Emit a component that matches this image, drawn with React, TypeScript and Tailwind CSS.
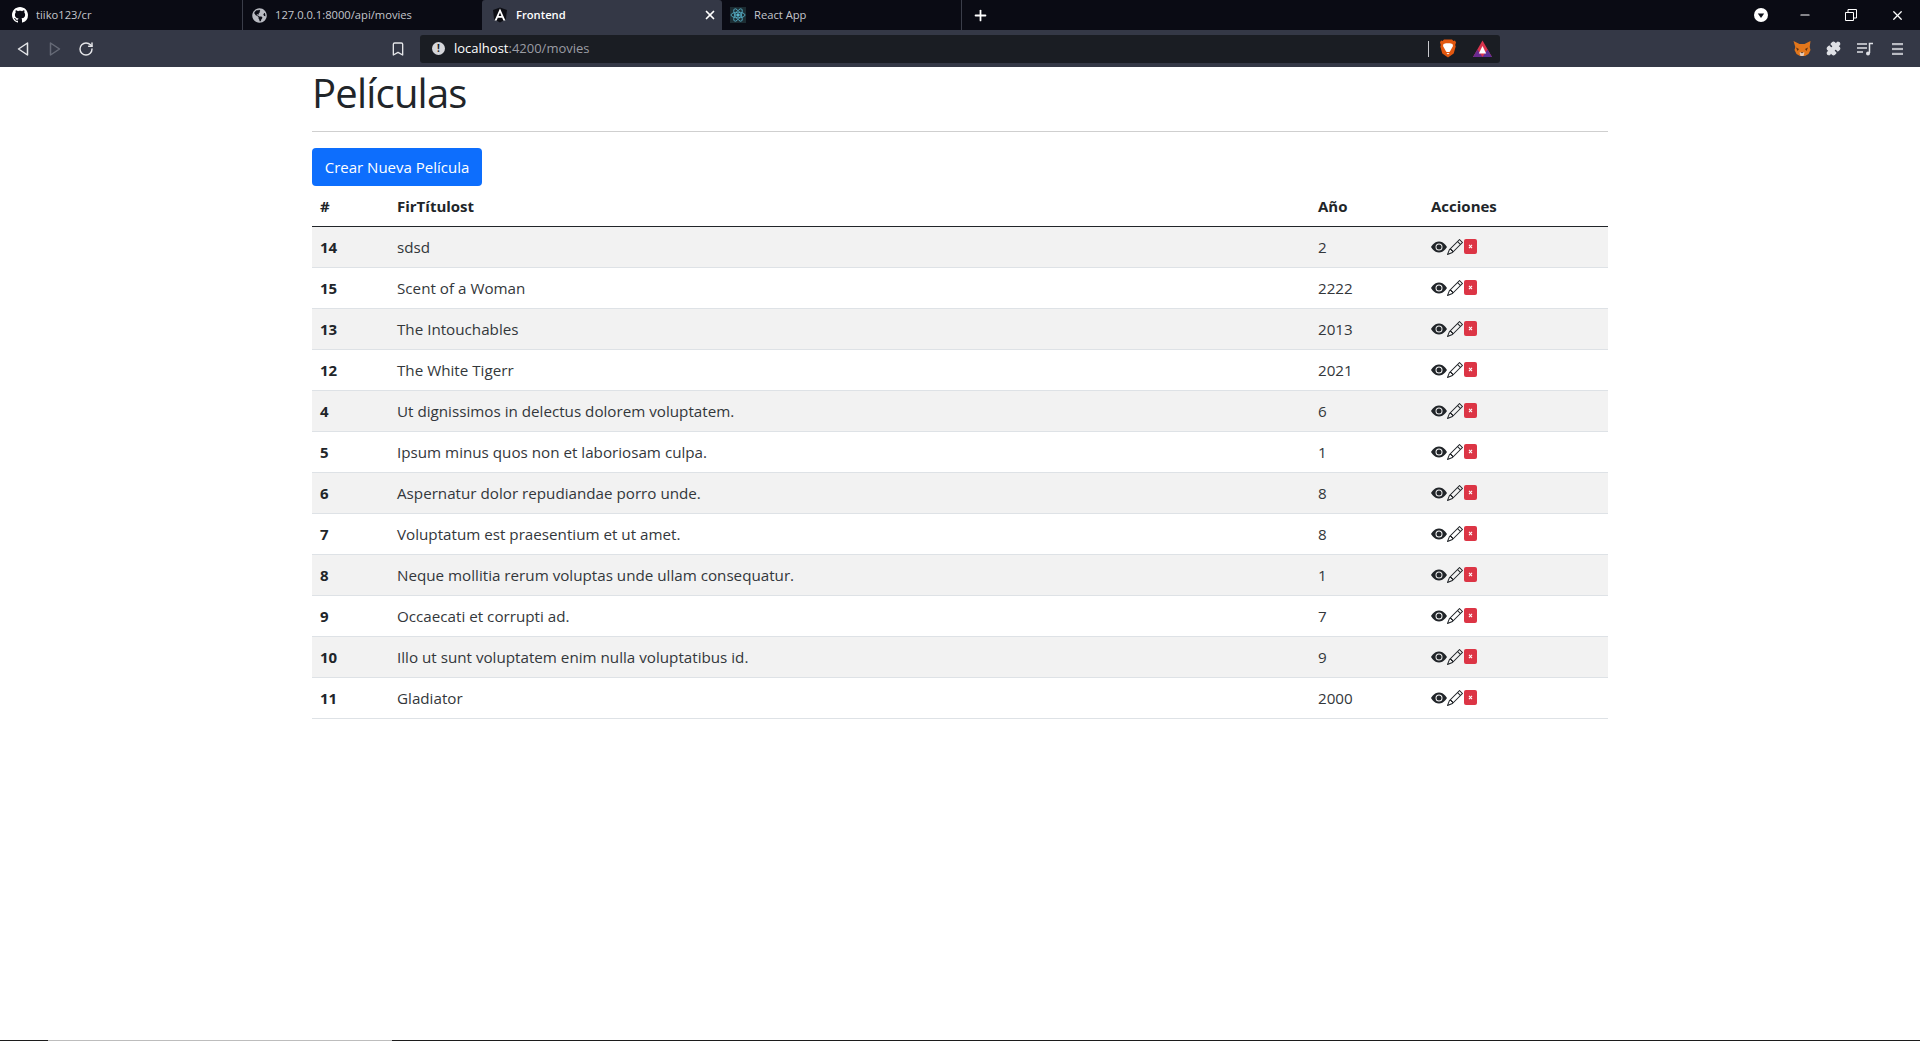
import { BsEyeFill, BsPencil } from 'react-icons/bs';
import { FaGlobeAmericas } from 'react-icons/fa';
import { Plus, X, Minus, RotateCw, Bookmark, Puzzle } from 'lucide-react';

const movies = [
  { id: 14, title: 'sdsd', year: '2' },
  { id: 15, title: 'Scent of a Woman', year: '2222' },
  { id: 13, title: 'The Intouchables', year: '2013' },
  { id: 12, title: 'The White Tigerr', year: '2021' },
  { id: 4, title: 'Ut dignissimos in delectus dolorem voluptatem.', year: '6' },
  { id: 5, title: 'Ipsum minus quos non et laboriosam culpa.', year: '1' },
  { id: 6, title: 'Aspernatur dolor repudiandae porro unde.', year: '8' },
  { id: 7, title: 'Voluptatum est praesentium et ut amet.', year: '8' },
  { id: 8, title: 'Neque mollitia rerum voluptas unde ullam consequatur.', year: '1' },
  { id: 9, title: 'Occaecati et corrupti ad.', year: '7' },
  { id: 10, title: 'Illo ut sunt voluptatem enim nulla voluptatibus id.', year: '9' },
  { id: 11, title: 'Gladiator', year: '2000' },
];

function GithubMark() {
  return (
    <svg viewBox="0 0 16 16" className="h-4 w-4 fill-white">
      <path d="M8 0C3.58 0 0 3.58 0 8c0 3.54 2.29 6.53 5.47 7.59.4.07.55-.17.55-.38 0-.19-.01-.82-.01-1.49-2.01.37-2.53-.49-2.69-.94-.09-.23-.48-.94-.82-1.13-.28-.15-.68-.52-.01-.53.63-.01 1.08.58 1.23.82.72 1.21 1.87.87 2.33.66.07-.52.28-.87.51-1.07-1.78-.2-3.64-.89-3.64-3.95 0-.87.31-1.59.82-2.15-.08-.2-.36-1.02.08-2.12 0 0 .67-.21 2.2.82.64-.18 1.32-.27 2-.27s1.36.09 2 .27c1.53-1.04 2.2-.82 2.2-.82.44 1.1.16 1.92.08 2.12.51.56.82 1.27.82 2.15 0 3.07-1.87 3.75-3.65 3.95.29.25.54.73.54 1.48 0 1.07-.01 1.93-.01 2.2 0 .21.15.46.55.38A8.01 8.01 0 0 0 16 8c0-4.42-3.58-8-8-8z" />
    </svg>
  );
}

function AngularMark() {
  return (
    <svg viewBox="0 0 16 16" className="h-4 w-4">
      <path d="M8 0.500 1 3l1.100 9.300L8 15.500l5.900-3.200L15 3z" fill="#0d0e14" />
      <path d="M8 1.500 2.600 13.500h2.100l1.100-2.700h4.400l1.100 2.700h2.100zM6.600 9 8 5.500 9.400 9z" fill="#fff" />
    </svg>
  );
}

function ReactMark() {
  return (
    <svg viewBox="0 0 16 16" className="h-4 w-4 bg-[#1c2c32]" fill="none" stroke="#58b4cc" strokeWidth="0.800">
      <ellipse cx="8" cy="8" rx="7" ry="2.800" />
      <ellipse cx="8" cy="8" rx="7" ry="2.800" transform="rotate(60 8 8)" />
      <ellipse cx="8" cy="8" rx="7" ry="2.800" transform="rotate(120 8 8)" />
      <circle cx="8" cy="8" r="1.300" fill="#58b4cc" />
    </svg>
  );
}

function BraveLion() {
  return (
    <svg viewBox="0 0 16 19" className="h-[19px] w-4">
      <path d="M4 0.500h8l1.500 1.500 1.500-.5 1 2-.8 2.500.5 1.500-2 7L8 18.500 2.300 14.500l-2-7 .5-1.500L0 3.500l1-2 1.500.5z" fill="#e2570f" />
      <path d="M3.500 5 6 4.200h4L12.500 5l.5 2-2.500 4.500L9.500 13h-3l-1-1.500L3 7z" fill="#fff" />
      <path d="M6.500 14h3L8 15.500z" fill="#fff" />
    </svg>
  );
}

function BraveRewards() {
  return (
    <svg viewBox="0 0 19 17" className="h-[17px] w-[19px]">
      <path d="M9.500 0.500 19 17H0z" fill="#d8344d" />
      <path d="M0 17 4.500 9.500 9.500 17z" fill="#6a2a8f" />
      <path d="M19 17 14.500 9.500 9.500 17z" fill="#5b2f96" />
      <path d="M9.500 6l3.700 7.500H5.800z" fill="#fff" />
    </svg>
  );
}

function FoxMark() {
  return (
    <svg viewBox="0 0 18 15" className="h-[15px] w-[18px]">
      <path d="M0.500 0 6.500 3h5l6-3-.8 6 .8 3-2 4-3.500 2h-5l-3.500-2-2-4 .8-3z" fill="#e2761b" />
      <path d="M3 6.500l3 1.500-1.500 2zM15 6.500l-3 1.500 1.500 2z" fill="#5c3212" />
      <path d="M6.500 11.500h5L10.500 15h-3z" fill="#e4c9b6" />
      <path d="M8 11h2l-1 1.500z" fill="#3a2a20" />
    </svg>
  );
}

function WalletBadge() {
  return (
    <svg viewBox="0 0 14 14" className="h-[14px] w-[14px]">
      <circle cx="7" cy="7" r="7" fill="#fff" />
      <path d="M3.800 5.500h6.400L7 10z" fill="#10131c" />
    </svg>
  );
}

function PlaylistIcon() {
  return (
    <svg viewBox="0 0 16 14" className="h-[14px] w-4" fill="none" stroke="#dfe1e6" strokeWidth="1.500">
      <path d="M0 2h10M0 6h10M0 10h6" />
      <path d="M12.500 11V1.500H16" />
      <circle cx="11" cy="11.500" r="2" fill="#dfe1e6" stroke="none" />
    </svg>
  );
}

function MenuBars() {
  return (
    <svg viewBox="0 0 11 12" className="h-3 w-[11px]" fill="#b9bbc2">
      <rect width="11" height="2.200" />
      <rect y="4.900" width="11" height="2.200" />
      <rect y="9.800" width="11" height="2.200" />
    </svg>
  );
}

function DeleteIcon() {
  return (
    <svg viewBox="0 0 13 15" className="ml-[1px] h-[15px] w-[13px]">
      <rect width="13" height="15" rx="2" fill="#dc3545" />
      <path d="M5 5.900l3 3.200M8 5.900l-3 3.200" stroke="#fff" strokeWidth="1.100" />
    </svg>
  );
}

function Tab({ icon, title, active, className, iconClass }: { icon: React.ReactNode; title: string; active?: boolean; className: string; iconClass: string }) {
  return (
    <div className={`flex h-[30px] shrink-0 items-center ${className} ${active ? 'rounded-t-[3px] bg-[#343846]' : 'bg-[#0a0b14]'}`}>
      <div className={`flex h-4 w-4 shrink-0 items-center justify-center ${iconClass}`}>{icon}</div>
      <span className={`ml-2 flex-1 truncate text-[11.2px] ${active ? 'font-semibold text-white' : 'text-[#c4c6cc]'}`}>{title}</span>
      {active && <X className="mr-[5px] h-3.5 w-3.5 text-white" strokeWidth={3} />}
    </div>
  );
}

function BrowserChrome() {
  return (
    <div className="shrink-0 font-['Open_Sans',sans-serif]">
      <div className="flex h-[30px] items-center bg-[#0a0b14]">
        <Tab icon={<GithubMark />} title="tiiko123/cr" className="w-[242px]" iconClass="ml-3" />
        <Tab icon={<FaGlobeAmericas className="h-[15px] w-[15px] text-[#b9bbc2]" />} title="127.0.0.1:8000/api/movies" className="w-[240px] border-l border-[#3a3d49]" iconClass="ml-2" />
        <Tab icon={<AngularMark />} title="Frontend" active className="w-[240px]" iconClass="ml-[10px]" />
        <Tab icon={<ReactMark />} title="React App" className="w-[240px] border-r border-[#3a3d49]" iconClass="ml-2" />
        <Plus className="ml-[10px] h-[17px] w-[17px] text-white" strokeWidth={2.500} />
        <div className="ml-auto flex items-center">
          <WalletBadge />
          <div className="ml-[14px] flex w-[46px] justify-center"><Minus className="h-3.5 w-3.5 text-white" strokeWidth={2} /></div>
          <div className="flex w-[46px] justify-center">
            <svg viewBox="0 0 12 12" className="h-3 w-3" fill="none" stroke="#fff">
              <path d="M0.500 3.500h8v8h-8zM3 3.500V0.500h8.500V9H8.500" />
            </svg>
          </div>
          <div className="flex w-[46px] justify-center"><X className="h-[15px] w-[15px] text-white" strokeWidth={2} /></div>
        </div>
      </div>
      <div className="flex h-[37px] items-center bg-[#343846]">
        <svg viewBox="0 0 14 16" className="ml-[16px] h-4 w-[14px]" fill="none" stroke="#e4e5e8" strokeWidth="1.500" strokeLinejoin="round">
          <path d="M11.500 2v12L2.500 8z" />
        </svg>
        <svg viewBox="0 0 14 16" className="ml-[18px] h-4 w-[14px]" fill="none" stroke="#666a77" strokeWidth="1.500" strokeLinejoin="round">
          <path d="M2.500 2v12l9-6z" />
        </svg>
        <RotateCw className="ml-[16px] h-4 w-4 text-[#e4e5e8]" strokeWidth={2.200} />
        <Bookmark className="ml-[296px] h-4 w-4 text-[#e4e5e8]" strokeWidth={2} />
        <div className="ml-[14px] flex h-[28px] w-[1080px] items-center rounded-[3px] bg-[#1a1d23]">
          <div className="ml-3 flex h-[13px] w-[13px] items-center justify-center rounded-full bg-[#d5d6da] text-[10px] font-bold text-[#1a1d23]">!</div>
          <span className="ml-[9px] text-[13px] text-white">localhost<span className="text-[#9a9ca3]">:4200/movies</span></span>
          <div className="ml-auto h-[16px] w-px bg-[#c9cace]" />
          <div className="ml-[11px]"><BraveLion /></div>
          <div className="mr-[8px] ml-[17px]"><BraveRewards /></div>
        </div>
        <div className="ml-auto flex items-center">
          <FoxMark />
          <Puzzle className="ml-[15px] h-[15px] w-[15px] fill-[#dfe1e6] text-[#dfe1e6]" />
          <div className="ml-[16px]"><PlaylistIcon /></div>
          <div className="mr-[17px] ml-[19px]"><MenuBars /></div>
        </div>
      </div>
    </div>
  );
}

export default function App() {
  return (
    <div className="flex h-screen flex-col bg-white font-['Open_Sans',sans-serif] text-[#212529]">
      <BrowserChrome />
      <main className="flex-1">
        <div className="mx-auto w-[1296px]">
          <h1 className="pt-[2px] text-[40px] leading-[48px] font-medium tracking-[-0.8px]">Películas</h1>
          <hr className="mt-[14px] border-t border-[#cfcfcf]" />
          <button className="mt-4 block h-[38px] w-[170px] rounded-[4px] bg-[#0d6efd] text-[15px] text-white">
            Crear Nueva Película
          </button>
          <table className="w-full table-fixed border-collapse text-[15.2px]">
            <colgroup>
              <col className="w-[77px]" />
              <col className="w-[921px]" />
              <col className="w-[113px]" />
              <col />
            </colgroup>
            <thead>
              <tr className="h-[40px] border-b border-[#212529] text-left text-[15px]">
                <th className="px-2 font-bold">#</th>
                <th className="px-2 font-bold">FirTítulost</th>
                <th className="px-2 font-bold">Año</th>
                <th className="px-2 font-bold">Acciones</th>
              </tr>
            </thead>
            <tbody>
              {movies.map((m, i) => (
                <tr key={m.id} className={`h-[41px] border-b border-[#dee2e6] ${i % 2 === 0 ? 'bg-[#f2f2f2]' : 'bg-white'}`}>
                  <td className="px-2 pt-[1px] text-[15px] font-bold">{m.id}</td>
                  <td className="px-2 pt-[1px] text-[#33373b]">{m.title}</td>
                  <td className="px-2 pt-[1px] text-[#33373b]">{m.year}</td>
                  <td className="px-2">
                    <div className="flex items-center">
                      <BsEyeFill className="h-4 w-4 text-[#212529]" />
                      <BsPencil className="h-4 w-4 text-[#212529]" />
                      <DeleteIcon />
                    </div>
                  </td>
                </tr>
              ))}
            </tbody>
          </table>
        </div>
      </main>
      <div className="flex h-px shrink-0 bg-[#1c1c1c]">
        <div className="ml-[48px] w-[344px] bg-[#bdbdbd]" />
      </div>
    </div>
  );
}
